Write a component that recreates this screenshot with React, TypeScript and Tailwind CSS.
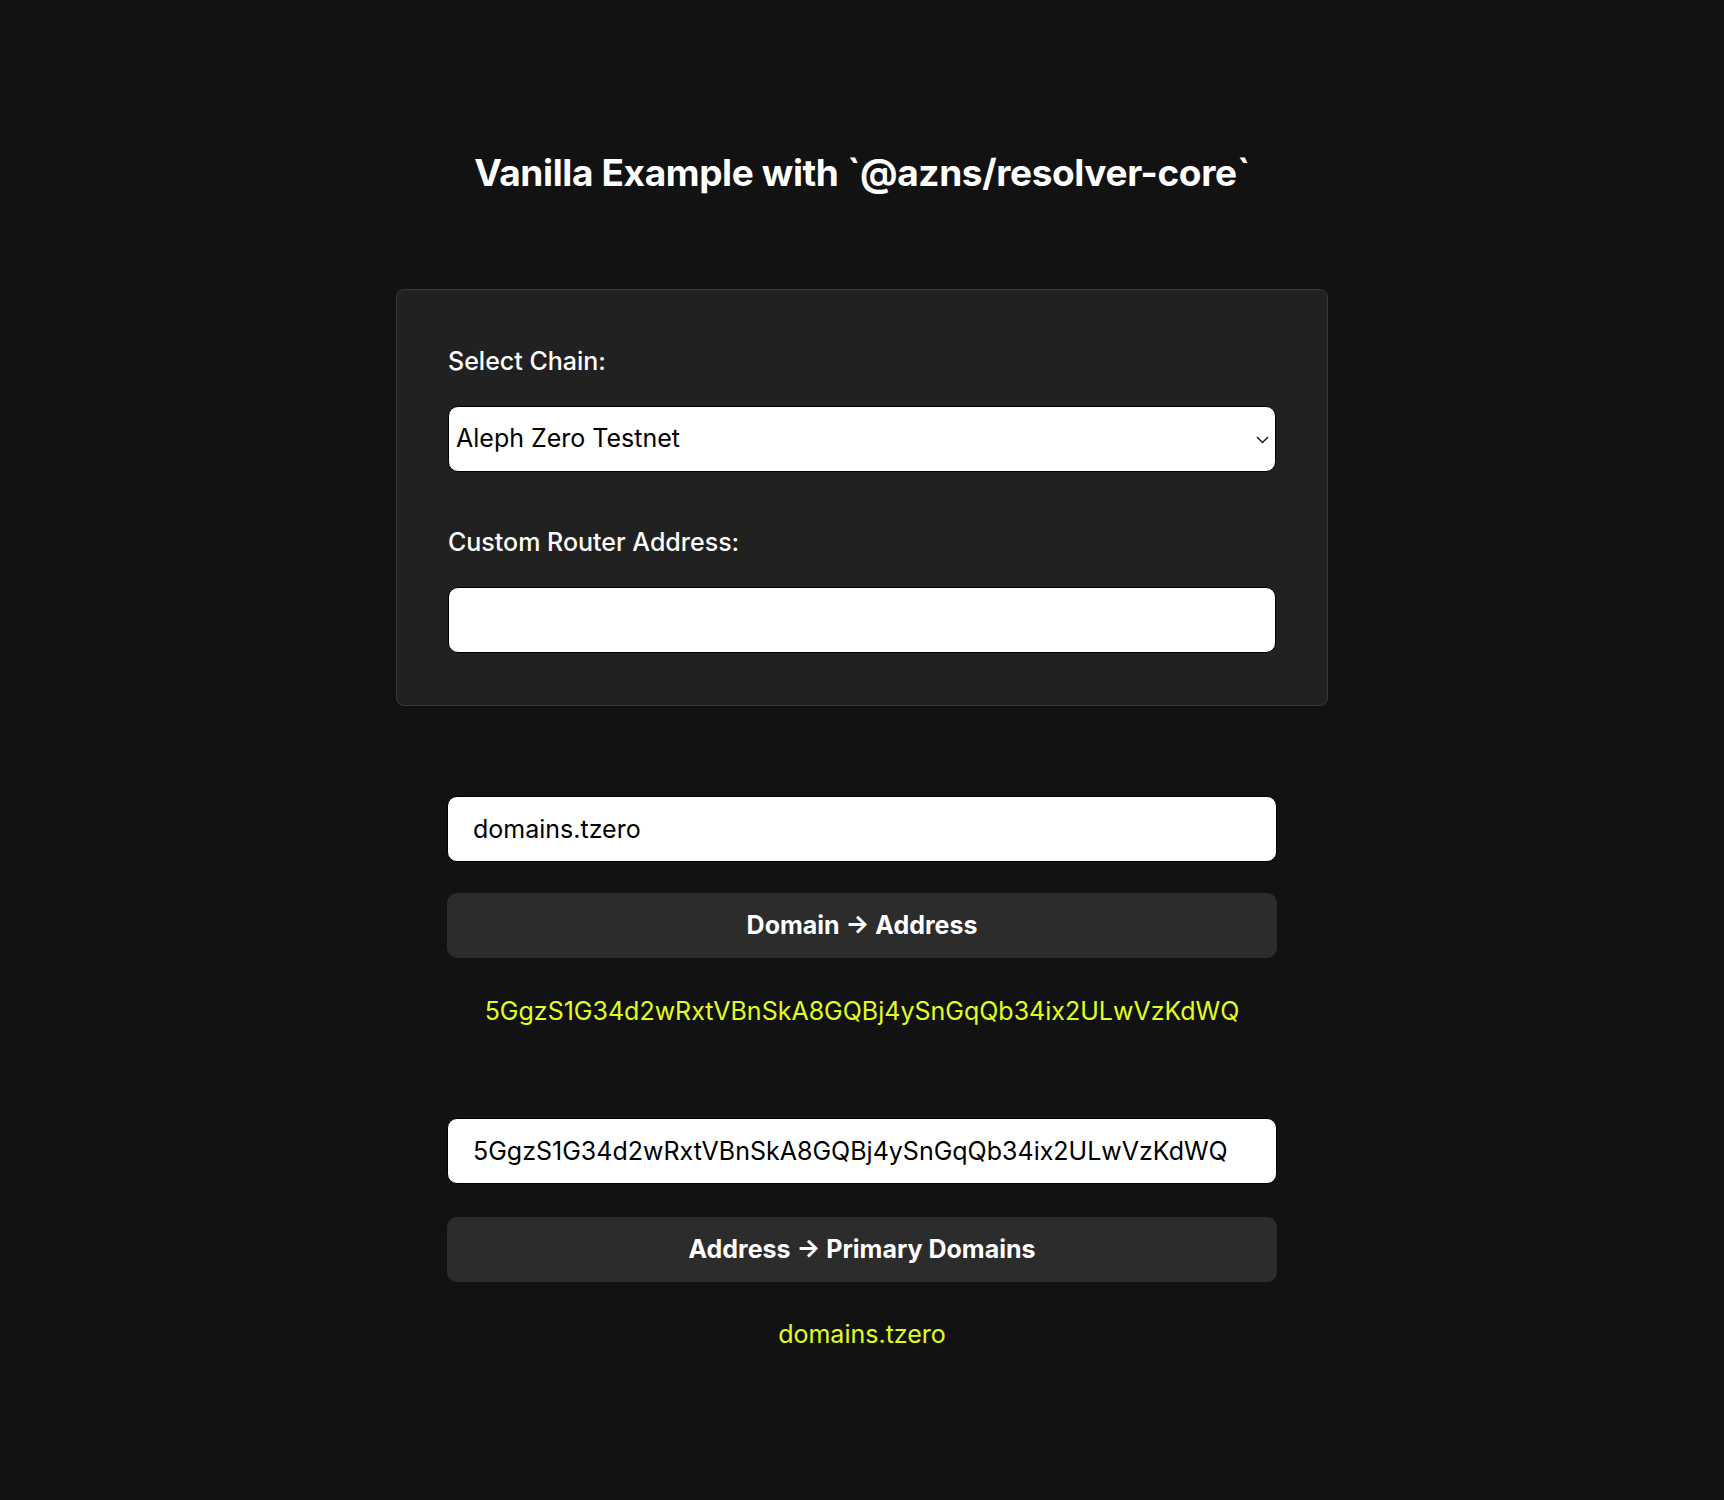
import React from 'react';

const font = { fontFamily: 'Inter, "Noto Sans", sans-serif' };

export default function App() {
  return (
    <div className="min-h-[1500px] bg-[#121212] text-white" style={font}>
      <main className="mx-auto flex w-[932px] flex-col items-center pt-[150px]">
        <h1 className="text-[37px] font-bold leading-[46px] tracking-[-0.01em]">
          Vanilla Example with `@azns/resolver-core`
        </h1>

        {/* Settings */}
        <section className="mt-[93px] w-full rounded-[8px] border border-[#383838] bg-[#212121] px-[51px] pt-[53px] pb-[52px]">
          <label className="block text-[25px] font-medium leading-[36px]">Select Chain:</label>
          <div className="relative mt-[27px]">
            <select
              defaultValue="testnet"
              className="h-[66px] w-full appearance-none rounded-[10px] border border-black bg-white px-[7px] text-[25px] text-black outline-none"
            >
              <option value="mainnet">Aleph Zero</option>
              <option value="testnet">Aleph Zero Testnet</option>
            </select>
            <svg
              className="pointer-events-none absolute right-[7px] top-[30px]"
              width="13"
              height="8"
              viewBox="0 0 13 8"
              fill="none"
              stroke="#111"
              strokeWidth="1.4"
            >
              <path d="M1 1l5.5 5.5L12 1" />
            </svg>
          </div>

          <label className="mt-[52px] block text-[25px] font-medium leading-[36px]">Custom Router Address:</label>
          <input
            className="mt-[27px] h-[66px] w-full rounded-[10px] border border-black bg-white px-[24px] text-[25px] text-black outline-none"
            defaultValue=""
          />
        </section>

        {/* Domain -> Address */}
        <section className="mt-[90px] flex w-[830px] flex-col items-center">
          <input
            className="h-[66px] w-full rounded-[10px] border border-black bg-white px-[25px] text-[25px] text-black outline-none"
            defaultValue="domains.tzero"
          />
          <button className="mt-[31px] h-[65px] w-full rounded-[10px] bg-[#2c2c2c] text-[25px] font-bold text-white">
            Domain → Address
          </button>
          <p className="mt-[37px] text-[25px] leading-[32px] text-[#e1ff1f]">
            5GgzS1G34d2wRxtVBnSkA8GQBj4ySnGqQb34ix2ULwVzKdWQ
          </p>
        </section>

        {/* Address -> Domains */}
        <section className="mt-[91px] flex w-[830px] flex-col items-center">
          <input
            className="h-[66px] w-full rounded-[10px] border border-black bg-white px-[25px] text-[25px] text-black outline-none"
            defaultValue="5GgzS1G34d2wRxtVBnSkA8GQBj4ySnGqQb34ix2ULwVzKdWQ"
          />
          <button className="mt-[33px] h-[65px] w-full rounded-[10px] bg-[#2c2c2c] text-[25px] font-bold text-white">
            Address → Primary Domains
          </button>
          <p className="mt-[36px] text-[25px] leading-[32px] text-[#e1ff1f]">domains.tzero</p>
        </section>
      </main>
    </div>
  );
}
